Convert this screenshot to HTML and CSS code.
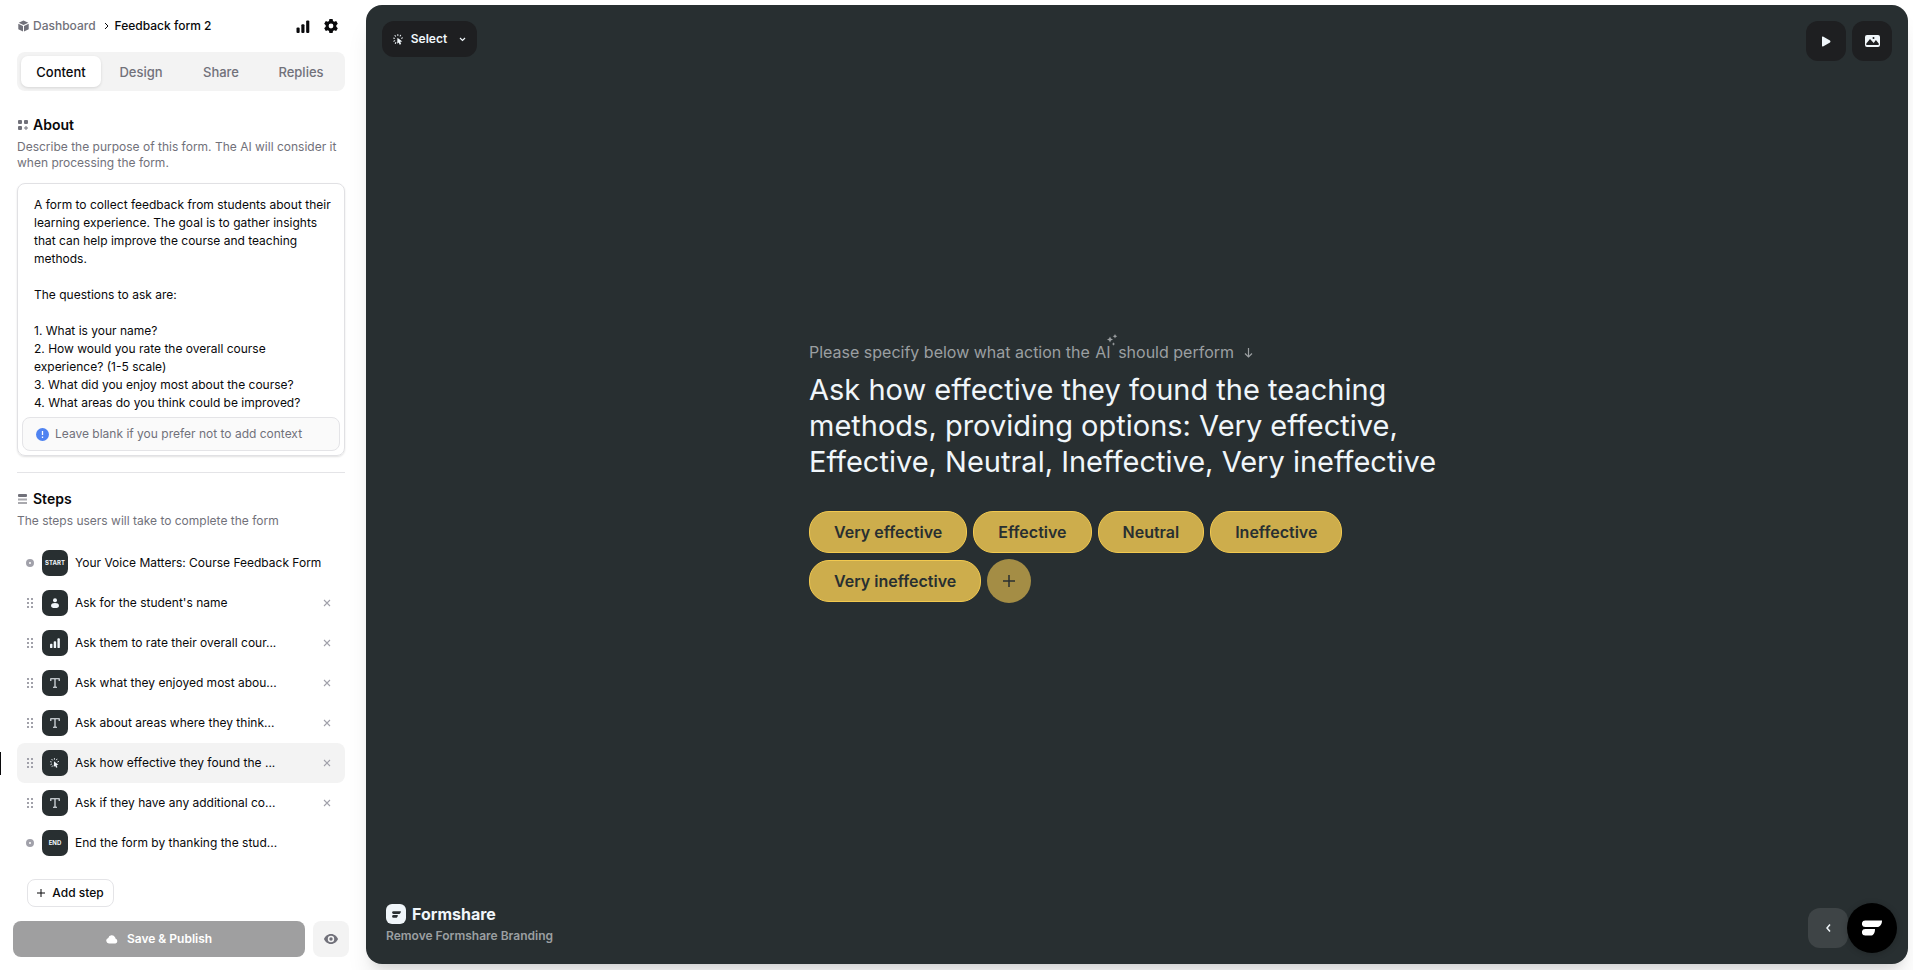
FILE: index.html
```html
<!DOCTYPE html>
<html lang="en">
<head>
<meta charset="utf-8">
<meta name="viewport" content="width=device-width, initial-scale=1">
<title>Feedback form 2</title>
<link rel="stylesheet" href="styles.css">
</head>
<body>
<svg class="sprite" aria-hidden="true">
  <symbol id="grip" viewBox="0 0 8 12"><path d="M0 1h2v2H0zM4 1h2v2H4zM0 5h2v2H0zM4 5h2v2H4zM0 9h2v2H0zM4 9h2v2H4z" fill="currentColor"/></symbol>
  <symbol id="bars" viewBox="0 0 14 14"><rect x="0" y="8" width="3.4" height="6" rx="1.2" fill="currentColor"/><rect x="5.2" y="4.5" width="3.4" height="9.5" rx="1.2" fill="currentColor"/><rect x="10.4" y="0.5" width="3.4" height="13.5" rx="1.2" fill="currentColor"/></symbol>
  <symbol id="letter" viewBox="0 0 10 10"><path d="M.8 3V.8h8.4V3M5 .8v8.4M3 9.2h4" fill="none" stroke="currentColor" stroke-width="1.1"/></symbol>
  <symbol id="cross" viewBox="0 0 8 8"><path d="M1 1l6 6M7 1L1 7" fill="none" stroke="currentColor" stroke-width="1.1"/></symbol>
  <symbol id="click" viewBox="0 0 12 12"><path d="M4.8 4l5.400 4.200-2.300.3 1 2.500-1.600.7-1.100-2.500-1.600 1.500z" fill="currentColor"/><path d="M5.3.6v1M2.2 1.600l.6.8M.6 4.500l1 .2M1 7.800l.9-.5M8.300 1.400l-.5.8M10.300 4.200l-.9.4M2.500 10.200l.6-.8" fill="none" stroke="currentColor" stroke-width="1.1" stroke-linecap="round"/></symbol>
  <symbol id="plus" viewBox="0 0 12 12"><path d="M6 0v12M0 6h12" fill="none" stroke="currentColor" stroke-width="1.5"/></symbol>
  <symbol id="mark" viewBox="0 0 20 16"><path d="M3.2.4H20C20 4.400 18 7 14.600 7H3.200A3.300 3.300 0 0 1 3.200.4zM3.200 9H13c0 4-1.500 6.600-4.500 6.600H3.200A3.300 3.300 0 0 1 3.200 9z" fill="currentColor"/></symbol>
</svg>
<aside class="sidebar">
  <header class="topbar">
    <nav class="crumbs" aria-label="Breadcrumb">
      <a href="#"><svg width="11" height="12" viewBox="0 0 11 12" aria-hidden="true"><path d="M5.500.4L10.300 2.700 5.500 5 .7 2.700zM.3 3.700L5 6v5.600L.3 9.200zM10.700 3.700L6 6v5.600l4.700-2.400z" fill="currentColor"/></svg>Dashboard</a>
      <svg class="crumb-arrow" width="5" height="8" viewBox="0 0 5 8" aria-hidden="true"><path d="M1 1l3 3-3 3" fill="none" stroke="currentColor"/></svg>
      <span>Feedback form 2</span>
    </nav>
    <div class="top-tools">
      <button type="button" aria-label="Statistics"><svg width="14" height="13"><use href="#bars"/></svg></button>
      <button type="button" aria-label="Settings"><svg width="14" height="14" viewBox="0 0 14 14"><path fill="currentColor" fill-rule="evenodd" d="M5.400 0h3.200l.4 2 1.200.7 2-.7 1.600 2.800-1.500 1.400v1.600l1.500 1.400-1.600 2.800-2-.7-1.200.7-.4 2H5.400L5 12l-1.200-.7-2 .7L.2 9.200l1.500-1.400V6.200L.2 4.800 1.800 2l2 .7L5 2zM7 4.600a2.400 2.400 0 1 0 0 4.800 2.400 2.400 0 0 0 0-4.800z"/></svg></button>
    </div>
  </header>
  <nav class="tabs" aria-label="Form sections">
    <button type="button" class="active">Content</button>
    <button type="button">Design</button>
    <button type="button">Share</button>
    <button type="button">Replies</button>
  </nav>
  <section class="about">
    <h2><svg width="12" height="12" viewBox="0 0 12 12" aria-hidden="true"><path fill="currentColor" d="M2 1h2q1 0 1 1v2q0 1-1 1H2q-1 0-1-1V2q0-1 1-1zM8 1h2q1 0 1 1v2q0 1-1 1H8q-1 0-1-1V2q0-1 1-1zM2 7h2q1 0 1 1v2q0 1-1 1H2q-1 0-1-1V8q0-1 1-1z"/><path d="M9 7v4M7 9h4" stroke="currentColor"/></svg><label for="context">About</label></h2>
    <p>Describe the purpose of this form. The AI will consider it when processing the form.</p>
    <div class="context-box">
      <textarea id="context" rows="12" spellcheck="false">A form to collect feedback from students about their learning experience. The goal is to gather insights that can help improve the course and teaching methods.

The questions to ask are:

1. What is your name?
2. How would you rate the overall course experience? (1-5 scale)
3. What did you enjoy most about the course?
4. What areas do you think could be improved?</textarea>
      <div class="hint"><svg width="13" height="13" viewBox="0 0 13 13" aria-hidden="true"><circle cx="6.500" cy="6.500" r="6.500" fill="#4f83f1"/><path d="M6.500 3v4M6.500 8.500V10" stroke="#fff" stroke-width="1.300"/></svg>Leave blank if you prefer not to add context</div>
    </div>
  </section>
  <section class="steps">
    <h2><svg width="12" height="12" viewBox="0 0 12 12" aria-hidden="true"><rect x="1" y="1" width="9" height="3" rx="1" fill="currentColor"/><path d="M1 6.500h9M1 10h9" stroke="currentColor" stroke-width="1.800" opacity=".6"/></svg>Steps</h2>
    <p>The steps users will take to complete the form</p>
    <ol>
      <li><i class="dot"></i><b class="tile">START</b><span>Your Voice Matters: Course Feedback Form</span></li>
      <li><svg class="grip"><use href="#grip"/></svg><b class="tile"><svg width="10" height="10" viewBox="0 0 10 10"><circle cx="5" cy="2.200" r="2" fill="currentColor"/><path d="M1 7.400Q1.500 5 5 5t4 2.400Q9 10 5 10T1 7.400z" fill="currentColor"/></svg></b><span>Ask for the student's name</span><button type="button" aria-label="Remove step"><svg><use href="#cross"/></svg></button></li>
      <li><svg class="grip"><use href="#grip"/></svg><b class="tile"><svg width="10" height="10"><use href="#bars"/></svg></b><span>Ask them to rate their overall cour...</span><button type="button" aria-label="Remove step"><svg><use href="#cross"/></svg></button></li>
      <li><svg class="grip"><use href="#grip"/></svg><b class="tile"><svg width="10" height="10"><use href="#letter"/></svg></b><span>Ask what they enjoyed most abou...</span><button type="button" aria-label="Remove step"><svg><use href="#cross"/></svg></button></li>
      <li><svg class="grip"><use href="#grip"/></svg><b class="tile"><svg width="10" height="10"><use href="#letter"/></svg></b><span>Ask about areas where they think...</span><button type="button" aria-label="Remove step"><svg><use href="#cross"/></svg></button></li>
      <li class="current"><svg class="grip"><use href="#grip"/></svg><b class="tile"><svg width="10" height="10"><use href="#click"/></svg></b><span>Ask how effective they found the ...</span><button type="button" aria-label="Remove step"><svg><use href="#cross"/></svg></button></li>
      <li><svg class="grip"><use href="#grip"/></svg><b class="tile"><svg width="10" height="10"><use href="#letter"/></svg></b><span>Ask if they have any additional co...</span><button type="button" aria-label="Remove step"><svg><use href="#cross"/></svg></button></li>
      <li><i class="dot"></i><b class="tile">END</b><span>End the form by thanking the stud...</span></li>
    </ol>
    <button type="button" class="add-step"><svg width="8" height="8"><use href="#plus"/></svg>Add step</button>
  </section>
  <footer class="actions">
    <button type="button" class="save"><svg width="12" height="10" viewBox="0 0 12 10" aria-hidden="true"><path d="M3 9.500A2.800 2.800 0 0 1 2.300 4 3.600 3.600 0 0 1 9 3.200q.6.700.6 1.500A2.500 2.500 0 0 1 9.400 9.500z" fill="currentColor"/></svg>Save &amp; Publish</button>
    <button type="button" class="preview" aria-label="Preview"><svg width="14" height="10" viewBox="0 0 14 10"><path fill="currentColor" fill-rule="evenodd" d="M7 0c3.500 0 6 2.500 7 5-1 2.500-3.500 5-7 5S1 7.500 0 5c1-2.500 3.500-5 7-5zm0 1.800a3.200 3.200 0 1 0 0 6.400 3.200 3.200 0 0 0 0-6.400z"/><circle cx="7" cy="5" r="1.700" fill="currentColor"/></svg></button>
  </footer>
  <i class="edge-tab"></i>
</aside>
<main class="stage">
  <div class="stage-bar">
    <button type="button" class="kind"><svg width="11" height="11" aria-hidden="true"><use href="#click"/></svg>Select<svg class="caret" width="7" height="5" viewBox="0 0 7 5" aria-hidden="true"><path d="M1 1l2.500 2.500L6 1" fill="none" stroke="currentColor" stroke-width="1.200"/></svg></button>
    <div class="stage-tools">
      <button type="button" aria-label="Play"><svg width="10" height="11" viewBox="0 0 10 11"><path d="M1 1.200Q1 0 2 .6l7 4q1 .9 0 1.800l-7 4Q1 11 1 9.800z" fill="currentColor"/></svg></button>
      <button type="button" aria-label="Background image"><svg width="15" height="12" viewBox="0 0 15 12"><path fill="currentColor" fill-rule="evenodd" d="M2 0h11q2 0 2 2v8q0 2-2 2H2q-2 0-2-2V2q0-2 2-2zm-.7 8.500V10h12.400V8.500L10.900 5 8.700 8 5 4zM8.500 2a1 1 0 1 0 0 2 1 1 0 0 0 0-2z"/></svg></button>
    </div>
  </div>
  <div class="question">
    <p class="prompt">Please specify below what action the <span class="ai">AI<svg width="12" height="12" viewBox="0 0 12 12" aria-hidden="true"><path fill="currentColor" d="M4 2.500l.9 2.100L7 5.500l-2.100.9L4 8.500l-.9-2.100L1 5.500l2.100-.9zM9 0l.7 1.500 1.600.7-1.600.7L9 4.500l-.7-1.600-1.600-.7 1.600-.7zM7.500 8.300l.5 1.200 1.200.5-1.200.5-.5 1.200-.5-1.200-1.200-.5 1.200-.5z"/></svg></span> should perform<svg class="down" width="9" height="10" viewBox="0 0 9 10" aria-hidden="true"><path d="M4.500 0v9M1 5.500L4.500 9 8 5.500" fill="none" stroke="currentColor" stroke-width="1.200"/></svg></p>
    <h1>Ask how effective they found the teaching methods, providing options: Very effective, Effective, Neutral, Ineffective, Very ineffective</h1>
    <div class="options">
      <button type="button">Very effective</button>
      <button type="button">Effective</button>
      <button type="button">Neutral</button>
      <button type="button">Ineffective</button>
      <button type="button">Very ineffective</button>
      <button type="button" class="add" aria-label="Add option"><svg width="12" height="12"><use href="#plus"/></svg></button>
    </div>
  </div>
  <footer class="stage-foot">
    <div class="brand">
      <div class="brand-name"><span class="brand-logo"><svg width="9" height="7"><use href="#mark"/></svg></span>Formshare</div>
      <a href="#">Remove Formshare Branding</a>
    </div>
    <div class="foot-tools">
      <button type="button" class="back" aria-label="Previous"><svg width="5" height="8" viewBox="0 0 5 8"><path d="M4 .5L1 4l3 3.500" fill="none" stroke="currentColor" stroke-width="1.500"/></svg></button>
      <button type="button" class="launcher" aria-label="Open Formshare"><svg width="20" height="16"><use href="#mark"/></svg></button>
    </div>
  </footer>
</main>
</body>
</html>
```

FILE: styles.css
```css
* { box-sizing: border-box; }
html { height: 100%; }
body {
  margin: 0;
  height: 100%;
  display: flex;
  overflow: hidden;
  background: #fff;
  color: #09090b;
  font: 12px/16px Inter, sans-serif;
}
button {
  font: inherit;
  color: inherit;
  border: 0;
  padding: 0;
  background: none;
  display: flex;
  align-items: center;
  justify-content: center;
  cursor: pointer;
}
a { color: inherit; text-decoration: none; }
h1, h2, p, ol { margin: 0; padding: 0; font-weight: 400; }
svg { flex: none; }
.sprite { display: none; }

/* Sidebar */
.sidebar {
  width: 366px;
  flex: none;
  display: flex;
  flex-direction: column;
  padding: 16px 21px 13px 17px;
  position: relative;
}
.topbar {
  display: flex;
  justify-content: space-between;
  align-items: center;
  height: 20px;
  padding-right: 7px;
}
.crumbs { display: flex; align-items: center; font-weight: 500; }
.crumbs a { display: flex; align-items: center; gap: 4px; padding-left: 1px; color: #71717a; }
.crumb-arrow { margin: 0 6px 0 8px; }
.top-tools { display: flex; gap: 14px; }
.tabs {
  display: grid;
  grid-template-columns: repeat(4, 1fr);
  margin-top: 16px;
  padding: 4px;
  border-radius: 8px;
  background: #f3f3f3;
}
.tabs button {
  height: 31px;
  border-radius: 7px;
  color: #71717a;
  font-size: 13px;
  font-weight: 500;
}
.tabs .active { background: #fff; color: #09090b; box-shadow: 0 1px 3px rgba(0, 0, 0, .12); }
.about { margin-top: 24px; padding-bottom: 16px; border-bottom: 1px solid #e4e4e7; }
h2 {
  display: flex;
  align-items: center;
  gap: 4px;
  font-size: 14px;
  line-height: 20px;
  font-weight: 600;
}
h2 svg, section > p { color: #71717a; }
section > p { margin-top: 4px; }
.context-box {
  margin-top: 12px;
  padding: 12px 4px 4px;
  border: 1px solid #e1e1e4;
  border-radius: 8px;
  box-shadow: 0 1px 2px rgba(0, 0, 0, .12);
}
textarea {
  display: block;
  width: 100%;
  border: 0;
  outline: 0;
  resize: none;
  overflow: hidden;
  padding: 0 2px 5px 12px;
  background: none;
  color: inherit;
  font: 12px/18px Inter, sans-serif;
}
.hint {
  display: flex;
  align-items: center;
  gap: 6px;
  height: 34px;
  padding-left: 13px;
  border: 1px solid #e4e4e7;
  border-radius: 8px;
  background: #fafafa;
  color: #71717a;
}
.steps { margin-top: 16px; }
ol { margin-top: 14px; list-style: none; }
li {
  display: flex;
  align-items: center;
  height: 40px;
  padding: 0 14px 0 9px;
  border-radius: 8px;
}
.current { background: #f3f3f3; }
li > span { flex: 1; white-space: nowrap; }
li button svg { width: 8px; height: 8px; color: #a1a1aa; }
.grip { width: 8px; height: 12px; margin: 0 7px 0 1px; color: #a1a1aa; }
.dot { width: 8px; height: 8px; margin-right: 8px; border: 3px solid #a1a1aa; border-radius: 50%; }
.tile {
  display: flex;
  align-items: center;
  justify-content: center;
  width: 26px;
  height: 26px;
  margin-right: 7px;
  border-radius: 7px;
  background: #282f31;
  color: #f0f6fa;
  font-size: 6px;
  font-weight: 700;
}
.add-step {
  gap: 7px;
  width: 87px;
  height: 28px;
  margin: 16px 0 0 10px;
  border: 1px solid #e4e4e7;
  border-radius: 8px;
  font-weight: 500;
}
.actions { display: flex; gap: 8px; margin: auto -4px 0; }
.actions button { height: 36px; border-radius: 8px; }
.save { flex: 1; gap: 9px; background: #9f9fa0; color: #fff; font-weight: 600; }
.preview { width: 36px; background: #f3f3f3; color: #71717a; }
.edge-tab {
  position: absolute;
  left: 0;
  top: 752px;
  width: 1px;
  height: 23px;
  background: #09090b;
}

/* Stage */
.stage {
  flex: 1;
  display: flex;
  flex-direction: column;
  margin: 5px 5px 6px 0;
  padding: 16px;
  border-radius: 16px;
  background: #282f31;
  box-shadow: 0 20px 25px -5px rgba(0, 0, 0, .1), 0 8px 10px -6px rgba(0, 0, 0, .1);
  color: #f0f6fa;
}
.stage-bar, .stage-tools { display: flex; justify-content: space-between; align-items: flex-start; }
.stage-tools { gap: 6px; }
.stage-bar button { background: #1e1f21; border-radius: 12px; }
.stage-bar .kind { width: 95px; height: 36px; gap: 7px; font-weight: 600; }
.kind .caret { margin-left: 5px; }
.stage-tools button { width: 40px; height: 40px; }
.question { width: 100%; max-width: 656px; margin: auto; padding-bottom: 22px; }
.prompt { color: #9b9fa1; font-size: 16px; line-height: 24px; }
.ai { position: relative; padding: 0 3px 0 1px; }
.ai svg { position: absolute; right: -4px; top: -8px; }
.down { margin-left: 10px; }
h1 { margin-top: 8px; font-size: 29px; line-height: 36px; }
.options { display: flex; flex-wrap: wrap; align-items: center; gap: 6px; margin-top: 31px; }
.options button {
  height: 42px;
  padding: 0 24px;
  border: 1px solid #f2c94f;
  border-radius: 20px;
  background: #cdad4c;
  color: #282f31;
  font-size: 16px;
  font-weight: 600;
}
.options .add { width: 44px; height: 44px; padding: 0; border: 0; border-radius: 50%; background: #a48d45; }
.stage-foot { display: flex; justify-content: space-between; align-items: flex-end; }
.brand { padding: 0 0 4px 4px; }
.brand-name { display: flex; align-items: center; gap: 6px; font-size: 16px; line-height: 20px; font-weight: 700; }
.brand-logo {
  display: flex;
  align-items: center;
  justify-content: center;
  width: 20px;
  height: 20px;
  border-radius: 6px;
  background: #f0f6fa;
  color: #282f31;
}
.brand a { display: block; margin-top: 4px; color: #9b9fa1; font-weight: 600; }
.foot-tools { display: flex; align-items: center; margin: 0 -5px -5px 0; }
.back { width: 40px; height: 40px; border-radius: 12px; background: #3e4446; }
.launcher {
  width: 50px;
  height: 50px;
  margin-left: -1px;
  border-radius: 50%;
  background: #000;
  color: #fff;
  box-shadow: 0 1px 6px rgba(0, 0, 0, .2);
}
```
